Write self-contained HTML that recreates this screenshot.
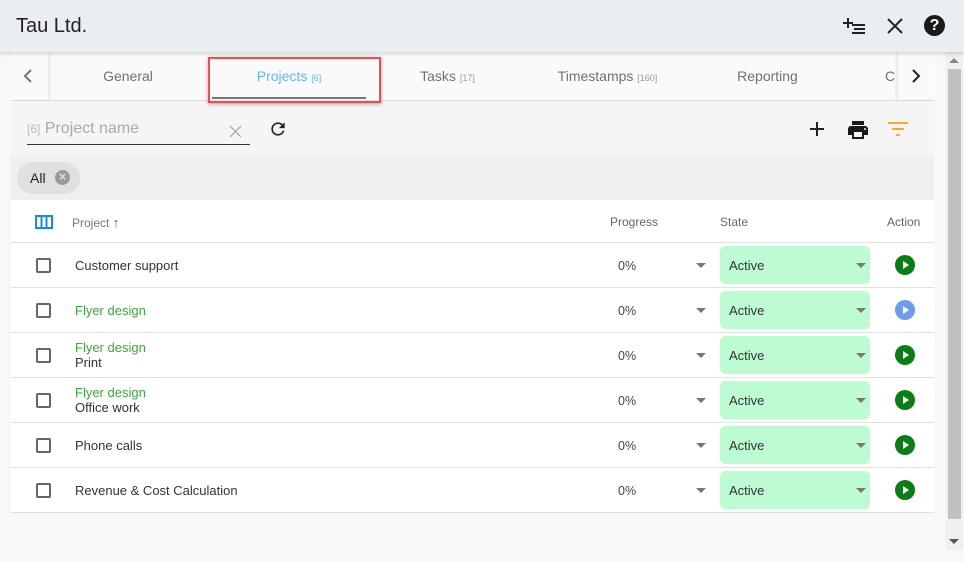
<!DOCTYPE html>
<html><head><meta charset="utf-8"><style>
*{box-sizing:border-box;margin:0;padding:0}
body{width:964px;height:562px;overflow:hidden;background:#f8f8f8;font-family:"Liberation Sans",Arial,sans-serif;position:relative;color:#333}
.abs{position:absolute}
.hdr{left:0;top:0;width:964px;height:52px;background:#eaeef2;box-shadow:0 2px 4px rgba(0,0,0,.15);z-index:2}
.tab{top:52px;height:48px;line-height:48px;font-size:14px;color:#707070;text-align:center}
.tab small{font-size:9px;color:#999}
.row{left:11px;width:923px;height:45px;border-bottom:1px solid #e0e0e0;background:#fff}
.cb{position:absolute;left:25px;top:15px;width:15px;height:15px;border:2px solid #666;border-radius:2px}
.name{position:absolute;left:64px;font-size:13px;color:#333}
.g{color:#3aab3a}
.pct{position:absolute;left:607px;top:16px;font-size:12.5px;color:#444}
.tri{position:absolute;width:0;height:0;border-left:5px solid transparent;border-right:5px solid transparent;border-top:5px solid #777}
.st{position:absolute;left:709px;top:3px;width:150px;height:38px;background:#bdfcd3;border-radius:5px;font-size:13px;color:#333;padding:12px 0 0 9px}
.play{position:absolute;left:884px;top:12px;width:20px;height:20px;border-radius:50%;background:#097d16}
.play:after{content:"";position:absolute;left:8px;top:6px;border-top:4px solid transparent;border-bottom:4px solid transparent;border-left:6px solid #fff}
</style></head><body>
<div class="abs hdr"><div class="abs" style="left:16px;top:15px;font-size:20px;color:#222">Tau Ltd.</div>
<svg class="abs" style="left:843px;top:16px" width="24" height="20" viewBox="0 0 24 20"><path d="M5 2v10M0 7h10M9 9h13M11 13h11M9 17h13" stroke="#222" stroke-width="2"/></svg>
<svg class="abs" style="left:886px;top:17px" width="18" height="18"><path d="M2 2L16 16M16 2L2 16" stroke="#222" stroke-width="2"/></svg>
<div class="abs" style="left:924px;top:15px;width:21px;height:21px;border-radius:50%;background:#1a1a1a;color:#fff;font-weight:bold;font-size:16px;text-align:center;line-height:21px">?</div>
</div>
<div class="abs" style="left:946px;top:52px;width:17px;height:498px;background:#f0f0f0"></div>
<div class="abs" style="left:948px;top:69px;width:13px;height:450px;background:#c1c1c1"></div>
<div class="abs tri" style="left:949px;top:58px;border-top:none;border-bottom:5px solid #888"></div>
<div class="abs tri" style="left:949px;top:539px;border-top-color:#555"></div>
<div class="abs" style="left:11px;top:52px;width:923px;height:49px;background:#fafafa;border-bottom:1px solid #ddd"></div>
<div class="abs" style="left:11px;top:52px;width:37px;height:48px;background:#fafafa;box-shadow:2px 0 3px rgba(0,0,0,.08)"><svg class="abs" style="left:12px;top:17px" width="10" height="14"><path d="M8 1L2 7l6 6" stroke="#777" stroke-width="2" fill="none"/></svg></div>
<div class="abs tab" style="left:68px;width:120px">General</div>
<div class="abs tab" style="left:212px;width:154px;color:#64b5f6">Projects <small style="color:#64b5f6">[6]</small></div>
<div class="abs" style="left:212px;top:97px;width:154px;height:2px;background:#777"></div>
<div class="abs tab" style="left:390px;width:115px">Tasks <small>[17]</small></div>
<div class="abs tab" style="left:540px;width:135px">Timestamps <small>[160]</small></div>
<div class="abs tab" style="left:710px;width:115px">Reporting</div>
<div class="abs tab" style="left:885px;width:13px;overflow:hidden;text-align:left">C</div>
<div class="abs" style="left:898px;top:52px;width:36px;height:48px;background:#fafafa;box-shadow:-2px 0 3px rgba(0,0,0,.08)"><svg class="abs" style="left:13px;top:17px" width="10" height="14"><path d="M2 1l6 6-6 6" stroke="#222" stroke-width="2" fill="none"/></svg></div>
<div class="abs" style="left:11px;top:101px;width:923px;height:55px;background:#f5f5f5"></div>
<div class="abs" style="left:27px;top:120px;font-size:16px;color:#aaa"><span style="font-size:12px;color:#bbb">[6]</span> Project name</div>
<div class="abs" style="left:27px;top:144px;width:223px;height:1px;background:#333"></div>
<svg class="abs" style="left:229px;top:125px" width="13" height="13"><path d="M1 1L12 12M12 1L1 12" stroke="#aaa" stroke-width="1.3"/></svg>
<svg class="abs" style="left:268px;top:119px" width="20" height="20" viewBox="0 0 24 24"><path d="M17.65 6.35A7.958 7.958 0 0012 4c-4.42 0-7.99 3.58-7.990 8s3.57 8 7.99 8c3.73 0 6.84-2.55 7.73-6h-2.080A5.99 5.99 0 0112 18c-3.31 0-6-2.69-6-6s2.69-6 6-6c1.66 0 3.14.69 4.22 1.78L13 11h7V4l-2.35 2.35z" fill="#222"/></svg>
<svg class="abs" style="left:809px;top:121px" width="16" height="16"><path d="M8 1v14M1 8h14" stroke="#222" stroke-width="2"/></svg>
<svg class="abs" style="left:846px;top:118px" width="24" height="24" viewBox="0 0 24 24"><path d="M19 8H5c-1.66 0-3 1.34-3 3v6h4v4h12v-4h4v-6c0-1.66-1.34-3-3-3zm-3 11H8v-5h8v5zm3-7c-.55 0-1-.45-1-1s.45-1 1-1 1 .45 1 1-.45 1-1 1zm-1-9H6v4h12V3z" fill="#1a1a1a"/></svg>
<svg class="abs" style="left:887px;top:121px" width="22" height="16"><path d="M1 2h20M5 8h12M9 14h4" stroke="#ffa726" stroke-width="2"/></svg>
<div class="abs" style="left:11px;top:156px;width:923px;height:44px;background:#efefef"></div>
<div class="abs" style="left:17px;top:162px;width:63px;height:32px;border-radius:16px;background:#e0e0e0;font-size:14px;color:#222;padding:8px 0 0 13px">All</div>
<div class="abs" style="left:55px;top:170px;width:15px;height:15px;border-radius:50%;background:#999;color:#e0e0e0;font-size:13px;text-align:center;line-height:14px;font-weight:bold">×</div>
<div class="abs" style="left:208px;top:57px;width:173px;height:46px;border:2px solid #f34b4b;box-shadow:0 1px 4px rgba(0,0,0,.3);z-index:5"></div>
<div class="abs" style="left:11px;top:200px;width:923px;height:43px;background:#fff;border-bottom:1px solid #e0e0e0"></div>
<svg class="abs" style="left:35px;top:215px" width="18" height="14"><rect x="1" y="1" width="16" height="12" fill="none" stroke="#1e88e5" stroke-width="2"/><path d="M6.5 1v12M11.5 1v12" stroke="#1e88e5" stroke-width="2"/></svg>
<div class="abs" style="left:72px;top:215px;font-size:12px;color:#777">Project <b style="color:#555;font-size:13px">↑</b></div>
<div class="abs" style="left:610px;top:215px;font-size:12px;color:#666">Progress</div>
<div class="abs" style="left:720px;top:215px;font-size:12px;color:#666">State</div>
<div class="abs" style="left:887px;top:215px;font-size:12px;color:#666">Action</div>
<div class="abs row" style="top:243px"><div class="cb"></div><div class="name" style="top:15px">Customer support</div><div class="pct">0%</div><div class="tri" style="left:685px;top:20px"></div><div class="st">Active<div class="tri" style="left:136px;top:17px"></div></div><div class="play"></div></div>
<div class="abs row" style="top:288px"><div class="cb"></div><div class="name g" style="top:15px">Flyer design</div><div class="pct">0%</div><div class="tri" style="left:685px;top:20px"></div><div class="st">Active<div class="tri" style="left:136px;top:17px"></div></div><div class="play" style="background:#6d9ceb"></div></div>
<div class="abs row" style="top:333px"><div class="cb"></div><div class="name" style="top:7px;line-height:15px"><span class="g">Flyer design</span><br>Print</div><div class="pct">0%</div><div class="tri" style="left:685px;top:20px"></div><div class="st">Active<div class="tri" style="left:136px;top:17px"></div></div><div class="play"></div></div>
<div class="abs row" style="top:378px"><div class="cb"></div><div class="name" style="top:7px;line-height:15px"><span class="g">Flyer design</span><br>Office work</div><div class="pct">0%</div><div class="tri" style="left:685px;top:20px"></div><div class="st">Active<div class="tri" style="left:136px;top:17px"></div></div><div class="play"></div></div>
<div class="abs row" style="top:423px"><div class="cb"></div><div class="name" style="top:15px">Phone calls</div><div class="pct">0%</div><div class="tri" style="left:685px;top:20px"></div><div class="st">Active<div class="tri" style="left:136px;top:17px"></div></div><div class="play"></div></div>
<div class="abs row" style="top:468px"><div class="cb"></div><div class="name" style="top:15px">Revenue &amp; Cost Calculation</div><div class="pct">0%</div><div class="tri" style="left:685px;top:20px"></div><div class="st">Active<div class="tri" style="left:136px;top:17px"></div></div><div class="play"></div></div>
</body></html>
